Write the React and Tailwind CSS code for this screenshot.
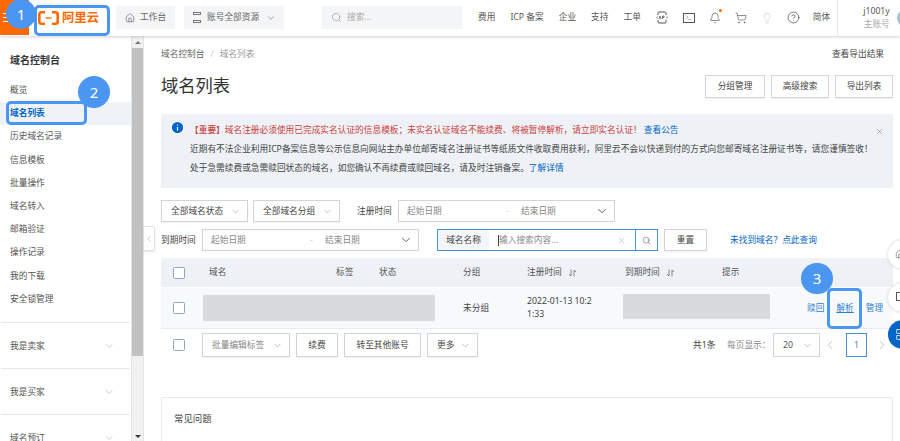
import React from 'react';
import { ChevronDown, ChevronLeft, ChevronRight, Home, Search, X, Bell, ShoppingCart, Lightbulb, CircleHelp, Terminal, Info, LayoutGrid } from 'lucide-react';

const FONT = { fontFamily: '"Noto Sans","Noto Sans CJK SC",sans-serif' };

function Logo() {
  return (
    <svg width="21" height="14" viewBox="0 0 21 14" fill="none" stroke="#ff6a00" strokeWidth="2.6">
      <path d="M7 1.3H3.5C2.2 1.3 1.3 2.2 1.3 3.5v7c0 1.3.9 2.2 2.2 2.2H7" />
      <path d="M14 1.3h3.5c1.3 0 2.2.9 2.2 2.2v7c0 1.3-.9 2.2-2.2 2.2H14" />
      <path d="M7.5 7h6" strokeWidth="1.4" />
    </svg>
  );
}

function SideItem({ children, active }) {
  return (
    <div className={active ? 'h-[23.2px] shrink-0 flex items-center pl-[10px] bg-[#eff3f8] text-[#0064c8] font-bold' : 'h-[23.2px] shrink-0 flex items-center pl-[10px] text-[#555]'}>
      {children}
    </div>
  );
}

function SideGroup({ children }) {
  return (
    <div className="mx-px h-[46px] pt-[2px] border-t border-[#e8e8e8] flex items-center justify-between pl-[9px] pr-[15px] text-[#555] shrink-0">
      <span>{children}</span>
      <ChevronDown size={12} strokeWidth={1} className="text-[#999]" />
    </div>
  );
}

function NavText({ children, className = '' }) {
  return <span className={`text-[#555] whitespace-nowrap ${className}`}>{children}</span>;
}

function Btn({ children, className = '' }) {
  return (
    <div className={`h-full flex items-center bg-white border border-[#cfd5dc] text-[#444] shrink-0 whitespace-nowrap shadow-[0_1px_1px_rgba(0,0,0,0.04)] ${className}`}>
      {children}
    </div>
  );
}

function Check() {
  return <div className="w-[12px] h-[12px] bg-white border border-[#8fa5bd] rounded-[1.5px] shrink-0" />;
}

function DateRange() {
  return (
    <div className="h-full w-[217px] bg-white border border-[#cfd5dc] flex items-center text-[#888] shrink-0">
      <span className="ml-[8px] w-[99px]">起始日期</span>
      <span className="w-[15px] text-[#ccc]">-</span>
      <span className="flex-1">结束日期</span>
      <ChevronDown size={14} strokeWidth={1.4} className="text-[#444] mr-[5px]" />
    </div>
  );
}

function Sort() {
  return (
    <svg width="9" height="8" viewBox="0 0 9 8" fill="none" stroke="#777" strokeWidth="0.9" className="ml-[6px]">
      <path d="M3 0.5v6.5L1 5" />
      <path d="M6 7.5V1L8 3" />
    </svg>
  );
}

export default function App() {
  return (
    <div style={FONT} className="relative w-[900px] h-[441px] overflow-hidden bg-white text-[8.7px] leading-[13px] text-[#444]">
      {/* Header */}
      <header className="h-[36px] flex items-start bg-white shadow-[0_1px_3px_rgba(0,0,0,0.18)] relative z-10">
        <div className="w-[29px] h-[35px] bg-[#ff6a00] flex flex-col justify-center gap-[3px] px-[3px] shrink-0">
          <div className="h-px bg-white" />
          <div className="h-px bg-white" />
          <div className="h-px bg-white" />
        </div>
        <div className="ml-[9px] w-[78px] h-[35px] flex items-center gap-[3px] shrink-0">
          <Logo />
          <span className="text-[#ff6a00] text-[12.5px] font-bold tracking-[-0.2px] whitespace-nowrap">阿里云</span>
        </div>
        <div className="mt-[6px] h-[23px] w-[59px] bg-[#f4f5f7] flex items-center pl-[9px] gap-[5px] text-[#666] shrink-0">
          <Home size={10} strokeWidth={1.6} />
          <span>工作台</span>
        </div>
        <div className="ml-[9px] mt-[6px] h-[23px] w-[100px] bg-[#f4f5f7] flex items-center pl-[9px] gap-[6px] text-[#666] shrink-0">
          <div className="w-[8px] h-[11px] flex flex-col justify-between">
            <div className="h-[3px] border border-[#777]" />
            <div className="h-[3px] border border-[#777]" />
          </div>
          <span>账号全部资源</span>
          <ChevronDown size={10} strokeWidth={1.4} className="ml-[1px]" />
        </div>
        <div className="ml-[38px] mt-[6px] h-[23px] w-[140px] bg-[#f4f5f7] flex items-center pl-[9px] gap-[5px] text-[#aaa] shrink-0">
          <Search size={11} strokeWidth={1.2} className="text-[#888]" />
          <span>搜索...</span>
        </div>
        <div className="h-[35px] flex items-center shrink-0">
          <NavText className="ml-[16px]">费用</NavText>
          <NavText className="ml-[15px]">ICP 备案</NavText>
          <NavText className="ml-[15px]">企业</NavText>
          <NavText className="ml-[15px]">支持</NavText>
          <NavText className="ml-[15px]">工单</NavText>
          <svg width="12" height="13" viewBox="0 0 12 13" fill="none" stroke="#555" strokeWidth="1" className="ml-[15px]">
            <path d="M2 4V2a1 1 0 0 1 1-1h6a1 1 0 0 1 1 1v2M2 9v2a1 1 0 0 0 1 1h6a1 1 0 0 0 1-1V9" />
            <path d="M1 5.5v2M11 5.5v2M3 8l1-3 1 3M6.5 8V5h1.5v1.5H6.5" strokeWidth="0.8" />
          </svg>
          <span className="ml-[15px] w-[12px] h-[10px] border border-[#555] flex items-center pl-[1.5px] shrink-0">
            <Terminal size={7} strokeWidth={1.6} className="text-[#555]" />
          </span>
          <span className="relative ml-[14px] flex">
            <Bell size={12} strokeWidth={1.3} className="text-[#555]" />
            <span className="absolute top-[-3px] right-[-1px] w-[3px] h-[3px] rounded-full bg-[#ff6a00]" />
          </span>
          <ShoppingCart size={12} strokeWidth={1.3} className="ml-[14px] text-[#555]" />
          <Lightbulb size={12} strokeWidth={1} className="ml-[14px] text-[#bbb]" />
          <CircleHelp size={13} strokeWidth={1.3} className="ml-[14px] text-[#444]" />
          <NavText className="ml-[13px]">简体</NavText>
        </div>
        <div className="ml-[7px] h-[35px] w-px bg-[#e8e8e8] shrink-0" />
        <div className="ml-[25px] h-[35px] flex flex-col justify-center items-end shrink-0">
          <span className="text-[#555]">j1001y</span>
          <span className="text-[#aaa]">主账号</span>
        </div>
        <div className="ml-[7px] mt-[9px] w-[18px] h-[18px] rounded-full bg-[#a9c0d0] shrink-0" />
      </header>

      {/* Body */}
      <div className="flex h-[405px]">
        {/* Sidebar */}
        <aside className="w-[144px] h-full flex shrink-0">
          <nav className="w-[131px] h-full overflow-hidden flex flex-col">
            <div className="h-[43px] pl-[10px] pt-[14px] text-[10px] leading-[20px] font-bold text-[#333] shrink-0">域名控制台</div>
            <SideItem>概览</SideItem>
            <SideItem active>域名列表</SideItem>
            <SideItem>历史域名记录</SideItem>
            <SideItem>信息模板</SideItem>
            <SideItem>批量操作</SideItem>
            <SideItem>域名转入</SideItem>
            <SideItem>邮箱验证</SideItem>
            <SideItem>操作记录</SideItem>
            <SideItem>我的下载</SideItem>
            <SideItem>安全锁管理</SideItem>
            <div className="h-[11px] shrink-0" />
            <SideGroup>我是卖家</SideGroup>
            <SideGroup>我是买家</SideGroup>
            <SideGroup>域名预订</SideGroup>
          </nav>
          <div className="w-[13px] h-full bg-[#f1f1f1] border-x border-[#e4e4e4] flex flex-col items-center">
            <div className="h-[12px] flex items-center justify-center shrink-0">
              <div className="w-0 h-0 border-x-[3px] border-x-transparent border-b-[3px] border-b-[#777]" />
            </div>
            <div className="w-full h-[308px] bg-[#c1c1c1] shrink-0" />
            <div className="flex-1 flex items-end justify-center pb-[3px]">
              <div className="w-0 h-0 border-x-[3px] border-x-transparent border-t-[3px] border-t-[#333]" />
            </div>
          </div>
        </aside>

        {/* Main */}
        <main className="relative w-[756px] h-full pl-[17px] pr-[7px] pt-[12px] flex flex-col overflow-hidden">
          <div className="h-[12px] flex items-center justify-between shrink-0">
            <div className="flex items-center gap-[6px] text-[#666]">
              <span>域名控制台</span>
              <span className="text-[#ccc]">/</span>
              <span className="text-[#999]">域名列表</span>
            </div>
            <span className="mr-[9px] text-[#444]">查看导出结果</span>
          </div>

          <div className="mt-[15px] h-[23px] flex items-center justify-between shrink-0">
            <h1 className="text-[17.3px] leading-[21px] pb-[2px] text-[#333]">域名列表</h1>
            <div className="h-full flex gap-[6px]">
              <Btn className="w-[60px] justify-center">分组管理</Btn>
              <Btn className="w-[58px] justify-center">高级搜索</Btn>
              <Btn className="w-[58px] justify-center">导出列表</Btn>
            </div>
          </div>

          <div className="mt-[16px] h-[74px] bg-[#eef2f7] flex shrink-0 relative">
            <Info size={15} fill="#0064c8" stroke="#fff" strokeWidth={2} className="ml-[9px] mt-[6px] shrink-0" />
            <div className="ml-[5px] mt-[7px] leading-[19px] whitespace-nowrap">
              <div className="text-[#c9403a]">
                <span className="font-medium">【重要】</span>域名注册必须使用已完成实名认证的信息模板；未实名认证域名不能续费、将被暂停解析，请立即实名认证！
                <span className="text-[#0064c8] ml-[2px]">查看公告</span>
              </div>
              <div className="text-[#444]">近期有不法企业利用ICP备案信息等公示信息向网站主办单位邮寄域名注册证书等纸质文件收取费用获利，阿里云不会以快递到付的方式向您邮寄域名注册证书等，请您谨慎签收！</div>
              <div className="text-[#444]">
                处于急需续费或急需赎回状态的域名，如您确认不再续费或赎回域名，请及时注销备案。
                <span className="text-[#0064c8]">了解详情</span>
              </div>
            </div>
            <X size={9} strokeWidth={1.2} className="absolute top-[13px] right-[9px] text-[#666]" />
          </div>

          {/* Filters */}
          <div className="mt-[12px] h-[22px] flex items-center shrink-0">
            <Btn className="w-[87px] justify-between pl-[9px] pr-[6px]">
              全部域名状态
              <ChevronDown size={11} strokeWidth={1} className="text-[#777]" />
            </Btn>
            <Btn className="ml-[5px] w-[87px] justify-between pl-[9px] pr-[6px]">
              全部域名分组
              <ChevronDown size={11} strokeWidth={1} className="text-[#777]" />
            </Btn>
            <span className="ml-[17px] w-[41px] text-[#444] shrink-0">注册时间</span>
            <DateRange />
          </div>
          <div className="mt-[7px] h-[22px] flex items-center shrink-0">
            <span className="w-[41px] text-[#444] shrink-0">到期时间</span>
            <DateRange />
            <div className="ml-[18px] w-[221px] h-full border border-[#4a90d9] bg-white flex items-center shrink-0">
              <div className="w-[51px] h-full bg-[#f4f6f9] flex items-center justify-center text-[#444] shrink-0">域名名称</div>
              <div className="ml-[9px] h-[11px] w-px bg-[#444] shrink-0" />
              <span className="flex-1 text-[#888]">输入搜索内容...</span>
              <X size={9} strokeWidth={1} className="text-[#888] mr-[9px]" />
              <div className="w-[22px] h-full border-l border-[#4a90d9] flex items-center justify-center">
                <Search size={9} strokeWidth={1.4} className="text-[#555]" />
              </div>
            </div>
            <Btn className="ml-[6px] w-[43px] justify-center">重置</Btn>
            <span className="ml-[23px] text-[#0064c8] whitespace-nowrap">未找到域名？点此查询</span>
          </div>

          {/* Table */}
          <div className="mt-[7px] h-[29px] bg-[#eef2f7] flex items-center text-[#555] shrink-0">
            <div className="w-[48px] pl-[12px] shrink-0"><Check /></div>
            <span className="w-[127px] shrink-0">域名</span>
            <span className="w-[43px] shrink-0">标签</span>
            <span className="w-[84px] shrink-0">状态</span>
            <span className="w-[64px] shrink-0">分组</span>
            <span className="w-[98px] shrink-0 flex items-center">注册时间<Sort /></span>
            <span className="w-[97px] shrink-0 flex items-center">到期时间<Sort /></span>
            <span className="shrink-0">提示</span>
          </div>
          <div className="mt-px h-[41px] bg-[#f7f9fb] border-b border-[#e8ecf0] flex items-center text-[#444] shrink-0">
            <div className="w-[42px] pl-[12px] shrink-0"><Check /></div>
            <div className="w-[232px] h-[26px] bg-[#d9dadc] rounded-[1px] shrink-0" />
            <span className="ml-[28px] w-[64px] shrink-0">未分组</span>
            <span className="w-[96px] shrink-0">2022-01-13 10:2<br />1:33</span>
            <div className="w-[147px] h-[25px] -mt-[3px] bg-[#d9dadc] rounded-[1px] shrink-0" />
            <span className="ml-[37px] text-[#2f7fd0] whitespace-nowrap shrink-0">赎回</span>
            <span className="ml-[5px] w-px h-[8px] bg-[#d8dde3] shrink-0" />
            <span className="ml-[6px] text-[#2f7fd0] underline whitespace-nowrap shrink-0">解析</span>
            <span className="ml-[12px] text-[#2f7fd0] whitespace-nowrap shrink-0">管理</span>
          </div>

          <div className="mt-[4px] h-[24px] flex items-center shrink-0">
            <div className="w-[41px] pl-[12px] shrink-0"><Check /></div>
            <Btn className="w-[88px] justify-between pl-[9px] pr-[6px] text-[#888]">
              批量编辑标签
              <ChevronDown size={11} strokeWidth={1} className="text-[#777]" />
            </Btn>
            <Btn className="ml-[6px] w-[42px] justify-center">续费</Btn>
            <Btn className="ml-[6px] w-[77px] justify-center">转至其他账号</Btn>
            <Btn className="ml-[6px] w-[51px] justify-between pl-[9px] pr-[6px]">
              更多
              <ChevronDown size={11} strokeWidth={1} className="text-[#777]" />
            </Btn>
            <span className="ml-[215px] w-[34px] shrink-0">共1条</span>
            <span className="w-[46px] text-[#888] shrink-0">每页显示：</span>
            <div className="w-[47px] h-full border border-[#cfd5dc] flex items-center justify-between pl-[9px] pr-[6px] shrink-0">
              <span className="text-[#555]">20</span>
              <ChevronDown size={11} strokeWidth={1} className="text-[#777]" />
            </div>
            <ChevronLeft size={14} strokeWidth={1} className="ml-[3px] text-[#999] shrink-0" />
            <div className="ml-[9px] w-[21px] h-[24px] border border-[#4a90d9] flex items-center justify-center text-[#4a7fb5] shrink-0">1</div>
            <ChevronRight size={14} strokeWidth={1} className="ml-[8px] text-[#999] shrink-0" />
          </div>

          <div className="mt-[40px] h-[60px] border border-[#e8e8e8] rounded-[1px] pl-[12px] pt-[14px] shrink-0">
            <div className="text-[#444] text-[9.4px]">常见问题</div>
          </div>
        </main>
      </div>

      {/* Floating dock on the right edge */}
      <div className="absolute left-[888px] top-[240px] w-[30px] h-[29px] rounded-full bg-white shadow-[0_0_3px_rgba(0,0,0,0.2)] z-20 pl-[7px] pt-[9px]">
        <Home size={10} strokeWidth={1.4} className="text-[#555]" />
      </div>
      <div className="absolute left-[888px] top-[283px] w-[30px] h-[29px] rounded-full bg-white shadow-[0_0_3px_rgba(0,0,0,0.2)] z-20 pl-[8px] pt-[9px]">
        <div className="w-[9px] h-[9px] border border-[#555]" />
      </div>
      <div className="absolute left-[888px] top-[320px] w-[30px] h-[29px] rounded-full bg-[#0064c8] z-20 pl-[7px] pt-[8px]">
        <LayoutGrid size={13} strokeWidth={1.4} className="text-white" />
      </div>

      {/* Sidebar collapse handle */}
      <div className="absolute left-[144px] top-[226px] w-[11px] h-[25px] bg-white border border-l-0 border-[#dfe3e8] rounded-r-[2px] shadow-[0_1px_2px_rgba(0,0,0,0.12)] flex items-center justify-center z-10">
        <ChevronLeft size={10} strokeWidth={1} className="text-[#888]" />
      </div>

      {/* Tutorial annotations */}
      <div className="absolute left-[34px] top-[5px] w-[76px] h-[31px] border-[3px] border-[#4a96f0] rounded-[5px] z-30" />
      <div className="absolute left-[6px] top-[-1px] w-[30px] h-[30px] rounded-full bg-[#4a96f0] text-white text-[15px] leading-[30px] text-center z-30">1</div>
      <div className="absolute left-[6px] top-[101px] w-[81px] h-[24px] border-[3px] border-[#4a96f0] rounded-[5px] z-30" />
      <div className="absolute left-[78px] top-[76px] w-[32px] h-[32px] rounded-full bg-[#4a96f0] text-white text-[15px] leading-[32px] text-center z-30">2</div>
      <div className="absolute left-[827px] top-[288px] w-[35px] h-[41px] border-[3px] border-[#4a96f0] rounded-[5px] z-30" />
      <div className="absolute left-[801px] top-[263px] w-[32px] h-[31px] rounded-full bg-[#4a96f0] text-white text-[15px] leading-[31px] text-center z-30">3</div>
    </div>
  );
}
